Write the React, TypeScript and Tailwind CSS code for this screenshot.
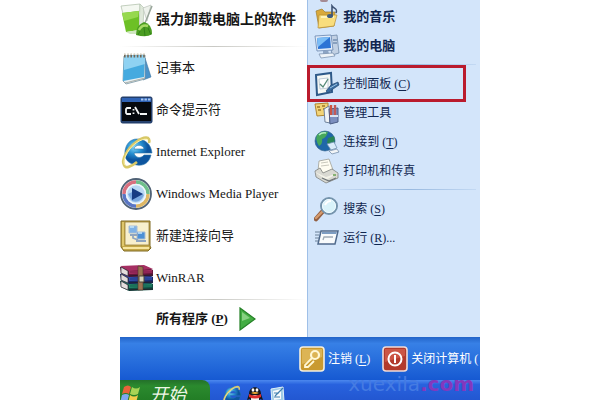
import React from "react";
import clsx from "clsx";

type MenuItem = {
  label: string;
  accessKey?: string;
  suffix?: string;
  icon: React.ReactNode;
  bold?: boolean;
  marked?: boolean;
};

const UninstallIcon = () => (
  <svg viewBox="0 0 34 36" className="h-9 w-[34px] shrink-0" aria-hidden="true">
    <path d="M1 4 20 2 20 9 3 12Z" fill="#f4f8f1" stroke="#b5c4b0" strokeWidth=".8" />
    <path d="M20 2 24 6 23 24 19 27Z" fill="#dfe8da" stroke="#b5c4b0" strokeWidth=".7" />
    <path d="M2 11 19 9 19 28 6 30Z" fill="#6dc026" />
    <path d="M2 11 19 9 18 15 4 19Z" fill="#96d84e" />
    <path d="M6 30 19 28 17 32 10 32Z" fill="#cfe6c0" />
    <path d="M23 6 31 3 27 19Z" fill="#eef2ec" stroke="#b9c2b8" strokeWidth=".7" />
    <path d="M32 4 25 21" stroke="#98a59a" strokeWidth="1.5" />
    <path d="M16 33Q16 23 24 20Q32 22 32 32Q27 36 16 33Z" fill="#4b9d22" />
    <path d="M19 28Q22 22 28 24" stroke="#a7db64" strokeWidth="2.4" fill="none" />
    <path d="M24 25 25 34M28 26 31 33M20 29 18 33" stroke="#2c7a15" strokeWidth=".8" />
  </svg>
);

const NotepadIcon = () => (
  <svg viewBox="0 0 34 36" className="h-9 w-[34px] shrink-0" aria-hidden="true">
    <path d="M25 8 31 27 23 30Z" fill="#4a93cb" stroke="#3a739f" strokeWidth=".6" />
    <path d="M4 6 25 5 25 29 6 34 3 31Z" fill="#e9f1f4" stroke="#7895a3" strokeWidth=".8" />
    <path d="M4 6 25 5 24 27 3 31Z" fill="#45aadf" />
    <path d="M4 6 25 5 25 14 4 20Z" fill="#8fd2f2" />
    <path d="M4 6h22" stroke="#726857" strokeWidth="3" strokeDasharray="1.6 1.6" />
    <path d="M4 4h22" stroke="#dad6c9" strokeWidth="1.5" strokeDasharray="1.6 1.6" />
    <path d="M5 33 25 28" stroke="#9a9f98" strokeWidth=".8" />
  </svg>
);

const PromptIcon = () => (
  <svg viewBox="0 0 34 28" className="h-7 w-[34px] shrink-0" aria-hidden="true">
    <rect x="1" y="1" width="31" height="26" rx="1.5" fill="#27436f" stroke="#1f3a68" />
    <path d="M2 2h29v4H2z" fill="#2f62b4" />
    <path d="M21 3.5h2.4M24.5 3.5h2.4M28 3.5h2.4" stroke="#a9c8f0" strokeWidth="2" />
    <path d="M2 6h29v19H2z" fill="#06090e" />
    <path
      d="M11 12H7l-1 1v4l1 1h4M13.500 13v1.500M13.500 16.500v1.500M15 11l4 7M20 18h7"
      stroke="#f3f5f5"
      strokeWidth="1.8"
      fill="none"
    />
  </svg>
);

const ExplorerIcon = ({ className }: { className: string }) => (
  <svg viewBox="0 0 34 34" className={clsx("shrink-0", className)} aria-hidden="true">
    <defs>
      <radialGradient id="ieBlue" cx=".35" cy=".3">
        <stop stopColor="#8cdaf7" />
        <stop offset=".55" stopColor="#258fd1" />
        <stop offset="1" stopColor="#0d559f" />
      </radialGradient>
    </defs>
    <path
      fillRule="evenodd"
      d="M17 4C25 4 31 9 32 18H14C15 23 21 24 24 20H31C29 28 24 31 17 30C8 29 4 24 5 16C6 9 10 4 17 4ZM14 14H24C23 9 15 9 14 14Z"
      fill="url(#ieBlue)"
      stroke="#2b75a9"
      strokeWidth=".6"
    />
    <path
      d="M29 8C31 1 24 1 16 7C7 14 1 25 4 30C5 34 11 32 17 27"
      stroke="#d8c867"
      strokeWidth="2.6"
      fill="none"
    />
    <path d="M28 5C25 2 15 7 9 15C4 22 3 28 5 30" stroke="#faf0a9" strokeWidth="1" fill="none" />
  </svg>
);

const MediaPlayerIcon = () => (
  <svg viewBox="0 0 34 34" className="h-[34px] w-[34px] shrink-0" aria-hidden="true">
    <circle cx="16" cy="17" r="15" fill="#e9eef3" stroke="#4f6175" strokeWidth="1.8" />
    <path d="M4 17A12 12 0 0 1 16 5" stroke="#d9707f" strokeWidth="3.4" fill="none" />
    <path d="M16 5A12 12 0 0 1 28 17" stroke="#6fbf8c" strokeWidth="3.4" fill="none" />
    <path d="M28 17A12 12 0 0 1 16 29" stroke="#dfb865" strokeWidth="3.4" fill="none" />
    <path d="M16 29A12 12 0 0 1 4 17" stroke="#5a76c4" strokeWidth="3.4" fill="none" />
    <circle cx="16" cy="17" r="9.5" fill="#b9d8f4" stroke="#edf6fb" strokeWidth="1.6" />
    <path d="M8 17Q16 12 24 18Q20 27 12 24Z" fill="#7aa8e0" />
    <path d="M12 11 23 17 12 23Z" fill="#173c83" />
  </svg>
);

const WizardIcon = () => (
  <svg viewBox="0 0 34 34" className="h-[34px] w-[34px] shrink-0" aria-hidden="true">
    <path d="M1 2H30V27L31 29 28 32H4L1 28Z" fill="#c4a84a" stroke="#806a22" />
    <path d="M5 3H29V26H5Z" fill="#f7efcd" stroke="#9a823a" strokeWidth=".8" />
    <path d="M3 29H29" stroke="#f7e6a0" strokeWidth="2" />
    <path d="M3 3V27" stroke="#dfc76c" strokeWidth="2" />
    <path d="M9 7H17V14H9Z" fill="#7fb2e6" stroke="#a7bdd8" />
    <path d="M17 13H25V20H17Z" fill="#4d90d6" stroke="#a7bdd8" />
    <path d="M10 16H18M16 22H26M13 16V19L18 21" stroke="#8fa5c0" strokeWidth="1.8" fill="none" />
    <path d="M10 8H14M18 14H22" stroke="#c8e6fa" strokeWidth="1.4" />
  </svg>
);

const Book = ({ y, fill, dark }: { y: number; fill: string; dark: string }) => (
  <g transform={`translate(0 ${y})`}>
    <path d="M0 2 25 1 33 5V11L9 12 1 8Z" fill={dark} />
    <path d="M0 1 24 0 33 4 9 6Z" fill={fill} />
    <path d="M9 6 32 5V8L9 9Z" fill={fill} />
    <path d="M10 7H32" stroke={dark} strokeWidth=".7" />
    <path d="M1 2 8 6V11L1 8Z" fill="#e4dddd" stroke="#322d38" strokeWidth=".7" />
    <path d="M9 11 33 10" stroke="#221d28" strokeWidth="1" />
  </g>
);

const WinRarIcon = () => (
  <svg viewBox="0 0 34 28" className="h-7 w-[34px] shrink-0" aria-hidden="true">
    <Book y={15} fill="#238468" dark="#104e42" />
    <Book y={8} fill="#3552b2" dark="#192969" />
    <Book y={1} fill="#a62f63" dark="#65153c" />
    <path d="M18 2 23 3V26H18Z" fill="#9c7252" stroke="#49362c" strokeWidth=".6" />
    <path d="M19 12H24V18H19Z" fill="#d7d3bb" stroke="#4b473d" />
  </svg>
);

const MusicIcon = () => (
  <svg viewBox="0 0 26 26" className="h-[26px] w-[26px] shrink-0" aria-hidden="true">
    <path d="M2 7 8 5 11 8H21L20 22 5 24Z" fill="#d9a93b" stroke="#9d7c2c" strokeWidth=".7" />
    <path d="M5 11H23L20 22 4 24Z" fill="#f8dd7d" stroke="#b98f35" strokeWidth=".7" />
    <path d="M7 13H20" stroke="#fff4ba" strokeWidth="2" />
    <ellipse cx="16" cy="12" rx="3" ry="2" fill="#3e5c80" />
    <path d="M18 12V2C20 5 24 4 22 9" stroke="#3e5374" strokeWidth="1.6" fill="none" />
  </svg>
);

const ComputerIcon = () => (
  <svg viewBox="0 0 26 26" className="h-[26px] w-[26px] shrink-0" aria-hidden="true">
    <path d="M15 3 23 2 25 20 18 22Z" fill="#c2d1e4" stroke="#637e9f" strokeWidth=".7" />
    <path d="M19 7H23M19 10H23" stroke="#4f709a" />
    <path d="M1 3 17 2 19 17 3 18Z" fill="#e2ecf8" stroke="#6684ae" strokeWidth=".8" />
    <path d="M3 5 16 4 17 15 4 16Z" fill="#2d74d5" />
    <path d="M3 5 16 4 4 14Z" fill="#7bbdf6" />
    <path d="M9 18 14 17 15 21 9 21Z" fill="#8ca4c4" />
    <path d="M5 21 19 20 21 23 7 25Z" fill="#eef3f8" stroke="#718aa9" strokeWidth=".7" />
  </svg>
);

const ControlPanelIcon = () => (
  <svg viewBox="0 0 26 26" className="h-[26px] w-[26px] shrink-0" aria-hidden="true">
    <path d="M2 4 17 2 18 21 3 24Z" fill="#f5f7f4" stroke="#2e5989" strokeWidth="2" />
    <path d="M5 8 14 7 14 17 6 18Z" fill="#fff" stroke="#a7bac8" strokeWidth=".7" />
    <path d="M6 13 9 16 14 8" stroke="#568a77" strokeWidth="1.3" fill="none" />
    <path d="M12 20 17 14 24 11 25 14 19 18 14 22Z" fill="#386ba0" stroke="#26486e" strokeWidth=".7" />
    <path d="M16 17 23 13" stroke="#9dc5e5" />
  </svg>
);

const ToolsIcon = () => (
  <svg viewBox="0 0 26 26" className="h-[26px] w-[26px] shrink-0" aria-hidden="true">
    <path d="M1 4 14 3 14 15 3 16Z" fill="#f3d477" stroke="#af8530" />
    <path d="M3 7H6M8 6H11M4 10H7M9 9H11" stroke="#9c7728" strokeWidth="1.6" />
    <path d="M10 9 15 6 16 23 11 22Z" fill="#f0f3f6" stroke="#70839b" />
    <path d="M15 9 24 8V22L16 24Z" fill="#7c8fbf" stroke="#4b5d85" />
    <path d="M17 5V17" stroke="#cd5440" strokeWidth="2.4" />
    <path d="M21 5V17" stroke="#c25a58" strokeWidth="2.4" />
    <path d="M16 16H24" stroke="#dbe5f2" strokeWidth="2" />
  </svg>
);

const ConnectIcon = () => (
  <svg viewBox="0 0 26 26" className="h-[26px] w-[26px] shrink-0" aria-hidden="true">
    <circle cx="11" cy="12" r="10" fill="#1f68a8" stroke="#2b5b83" strokeWidth=".6" />
    <path d="M3 6Q8 1 14 3Q12 9 8 10Q9 15 5 17Q1 11 3 6Z" fill="#45a75b" />
    <path d="M14 9 20 7Q22 13 18 17L13 14Z" fill="#298555" />
    <path d="M5 6Q8 3 12 4" stroke="#b4ecc5" strokeWidth="1.6" fill="none" />
    <path d="M13 15 20 13 23 19 17 21Z" fill="#d9ebf9" stroke="#6f90b0" strokeWidth=".8" />
    <path d="M15 22 23 20 25 23 18 25Z" fill="#f2f5f7" stroke="#7891ac" strokeWidth=".8" />
  </svg>
);

const PrinterIcon = () => (
  <svg viewBox="0 0 26 26" className="h-[26px] w-[26px] shrink-0" aria-hidden="true">
    <path d="M4 13 5 3 15 1 19 12 9 16Z" fill="#fffdf1" stroke="#a0a096" strokeWidth=".8" />
    <path d="M7 5 14 4M7 8 15 7" stroke="#c9c8bc" />
    <path d="M1 13 6 10 9 15 18 11 24 15V20L12 25 2 19Z" fill="#d9d9d2" stroke="#7f827f" strokeWidth=".8" />
    <path d="M1 14 12 19 24 15 12 22Z" fill="#f3f2e8" />
    <path d="M8 20 15 23 22 20" stroke="#6e7477" strokeWidth="1.3" fill="none" />
    <path d="M19 17H22" stroke="#66a151" strokeWidth="1.5" />
  </svg>
);

const SearchIcon = () => (
  <svg viewBox="0 0 26 26" className="h-[26px] w-[26px] shrink-0" aria-hidden="true">
    <path d="M9 15 2 23" stroke="#925f42" strokeWidth="4.6" strokeLinecap="round" />
    <path d="M8 16 2 22" stroke="#d59b6d" strokeWidth="2.4" strokeLinecap="round" />
    <circle cx="15" cy="10" r="8" fill="#c9ecf8" stroke="#7594ac" strokeWidth="2" />
    <circle cx="15" cy="10" r="6.5" fill="#d9f3fa" stroke="#f2fbff" />
    <path d="M11 9Q13 5 17 5" stroke="#fff" strokeWidth="2" fill="none" />
  </svg>
);

const RunIcon = () => (
  <svg viewBox="0 0 26 26" className="h-[26px] w-[26px] shrink-0" aria-hidden="true">
    <path d="M7 6H24L21 19H4Z" fill="#f9fbfc" stroke="#506a8c" strokeWidth="1.5" />
    <path d="M8 7H23L22 9H8Z" fill="#7d9dc2" />
    <path d="M9 15 10 12H19" stroke="#9eabb5" strokeWidth="1.3" fill="none" />
    <path d="M1 7H6M1 10H5M1 13H5M1 16H4" stroke="#6b8097" />
  </svg>
);

const KeyIcon = () => (
  <svg viewBox="0 0 26 26" className="h-[26px] w-[26px] shrink-0" aria-hidden="true">
    <rect x="1" y="1" width="24" height="24" rx="3" fill="#c99a30" stroke="#f4efe0" strokeWidth="1.6" />
    <path d="M3 3H23V11L3 18Z" fill="#dcb455" />
    <circle cx="16" cy="9" r="4" fill="none" stroke="#fff7d4" strokeWidth="2.2" />
    <path d="M13 12 6 19V21H9L15 15" stroke="#fff7d4" strokeWidth="1.8" fill="none" />
  </svg>
);

const PowerIcon = () => (
  <svg viewBox="0 0 26 26" className="h-[26px] w-[26px] shrink-0" aria-hidden="true">
    <rect x="1" y="1" width="24" height="24" rx="3" fill="#b23a2c" stroke="#f1dcd8" strokeWidth="1.6" />
    <path d="M3 3H23V10L3 16Z" fill="#cb5646" />
    <circle cx="13" cy="13" r="6.5" fill="none" stroke="#fff" strokeWidth="2" />
    <path d="M13 9V17" stroke="#fff" strokeWidth="2" />
  </svg>
);

const FlagIcon = () => (
  <svg viewBox="0 0 22 22" className="h-[22px] w-[22px] shrink-0" aria-hidden="true">
    <path d="M4 3Q8 0 11 3L9 10Q6 8 2 10Z" fill="#e8633a" />
    <path d="M12 3Q16 6 20 3L18 10Q14 12 10 10Z" fill="#a8d455" />
    <path d="M2 11Q6 9 9 11L7 19Q4 16 0 19Z" fill="#7fa8f0" />
    <path d="M10 11Q14 14 18 11L16 19Q12 21 8 19Z" fill="#f3cc4b" />
  </svg>
);

const PenguinIcon = () => (
  <svg viewBox="0 0 18 20" className="h-5 w-[18px] shrink-0" aria-hidden="true">
    <path d="M3 9C3 0 15 0 15 9L17 15 14 14 13 18H5L4 14 1 15Z" fill="#15171e" />
    <ellipse cx="9" cy="14" rx="4" ry="4" fill="#f7f7f2" />
    <path d="M3 9Q9 12 15 9V12Q9 15 3 12Z" fill="#dc2d2d" />
    <ellipse cx="7" cy="5" rx="1.4" ry="1.8" fill="#fff" />
    <ellipse cx="11" cy="5" rx="1.4" ry="1.8" fill="#fff" />
    <path d="M5 8Q9 6 13 8Q9 10 5 8Z" fill="#efac32" />
    <path d="M2 18H8M10 18H16" stroke="#efac32" strokeWidth="2" />
  </svg>
);

const DesktopIcon = () => (
  <svg viewBox="0 0 18 20" className="h-5 w-[18px] shrink-0" aria-hidden="true">
    <path d="M3 4 15 2 16 16 4 18Z" fill="#9fcbe6" stroke="#e1f1f8" />
    <path d="M5 6 13 4 13 14 6 15Z" fill="#f7fafc" />
    <path d="M7 11 15 3M6 8H11M6 12H12" stroke="#407fae" strokeWidth="1.2" />
  </svg>
);

const programs: MenuItem[] = [
  { label: "记事本", icon: <NotepadIcon /> },
  { label: "命令提示符", icon: <PromptIcon /> },
  { label: "Internet Explorer", icon: <ExplorerIcon className="h-[34px] w-[34px]" /> },
  { label: "Windows Media Player", icon: <MediaPlayerIcon /> },
  { label: "新建连接向导", icon: <WizardIcon /> },
  { label: "WinRAR", icon: <WinRarIcon /> },
];

const places: MenuItem[][] = [
  [
    { label: "我的音乐", icon: <MusicIcon />, bold: true },
    { label: "我的电脑", icon: <ComputerIcon />, bold: true },
  ],
  [
    { label: "控制面板", accessKey: "C", icon: <ControlPanelIcon />, marked: true },
    { label: "管理工具", icon: <ToolsIcon /> },
    { label: "连接到", accessKey: "T", icon: <ConnectIcon /> },
    { label: "打印机和传真", icon: <PrinterIcon /> },
  ],
  [
    { label: "搜索", accessKey: "S", icon: <SearchIcon /> },
    { label: "运行", accessKey: "R", suffix: "...", icon: <RunIcon /> },
  ],
];

const Label = ({ label, accessKey, suffix }: Pick<MenuItem, "label" | "accessKey" | "suffix">) => (
  <span className="whitespace-nowrap">
    {label}
    {accessKey && (
      <>
        {" ("}
        <u className="underline-offset-2">{accessKey}</u>)
      </>
    )}
    {suffix}
  </span>
);

const ProgramButton = ({ item }: { item: MenuItem }) => (
  <button type="button" className="flex h-[42px] w-full items-center gap-0.5 text-left text-[13px]">
    {item.icon}
    <Label {...item} />
  </button>
);

const PlaceButton = ({ item }: { item: MenuItem }) => (
  <button
    type="button"
    className={clsx(
      "relative flex h-[29px] w-full items-center gap-[3px] pl-1.5 text-left text-[#10264f]",
      item.bold ? "text-[13px] font-bold" : "text-xs"
    )}
  >
    {item.icon}
    <Label {...item} />
    {item.marked && (
      <span className="absolute -inset-y-1 right-3.5 -left-px border-[3px] border-[#ba1b2d]" />
    )}
  </button>
);

export default function App() {
  return (
    <main className="h-screen overflow-hidden bg-white font-['Liberation_Serif','Noto_Sans_CJK_SC',serif] text-[#161616]">
      <div className="mx-auto flex w-3/5 flex-col overflow-hidden">
        <div className="flex">
          <section className="w-[52%]">
            <button
              type="button"
              className="flex h-10 w-full items-center gap-0.5 text-left text-sm font-bold"
            >
              <UninstallIcon />
              <Label label="强力卸载电脑上的软件" />
            </button>
            <div className="mt-1.5 h-px bg-linear-to-r from-white via-[#c9c9c4] to-white" />
            {programs.map((item) => (
              <ProgramButton key={item.label} item={item} />
            ))}
            <div className="h-px bg-linear-to-r from-white via-[#c9c9c4] to-white" />
            <button
              type="button"
              className="flex h-[37px] w-full items-center gap-2.5 pl-9 text-[13px] font-bold"
            >
              <Label label="所有程序" accessKey="P" />
              <svg viewBox="0 0 18 24" className="h-6 w-[18px]" aria-hidden="true">
                <path d="M2 1 17 12 2 23Z" fill="#43ad43" stroke="#258127" strokeWidth="1.2" />
                <path d="M4 5 12 11 4 14Z" fill="#86d181" />
              </svg>
            </button>
          </section>

          <section className="relative flex-1 border-l border-[#9fc0e8] bg-[#d3e5fa] pt-0.5">
            <span className="absolute top-0 left-3 h-0.5 w-2 rounded-b-full bg-[#a58b93]" />
            {places.map((group, i) => (
              <React.Fragment key={group[0].label}>
                {i > 0 && (
                  <div className="flex h-[9px] items-center pr-1 pl-8">
                    <div className="h-px w-full bg-linear-to-r from-[#c3d9f3] via-[#98b9df] to-[#c3d9f3]" />
                  </div>
                )}
                {group.map((item) => (
                  <PlaceButton key={item.label} item={item} />
                ))}
              </React.Fragment>
            ))}
          </section>
        </div>

        <div className="flex h-[43px] items-center gap-3 overflow-hidden bg-linear-to-b from-[#2364c8] via-[#3780e6] via-15% to-[#1659d2] pl-[49.700%] text-xs text-white">
          <button type="button" className="flex shrink-0 items-center gap-[3px]">
            <KeyIcon />
            <Label label="注销" accessKey="L" />
          </button>
          <button type="button" className="flex shrink-0 items-center gap-[3px]">
            <PowerIcon />
            <Label label="关闭计算机 (" />
          </button>
        </div>

        <div className="relative flex h-[30px] items-center bg-linear-to-b from-[#4c88ee] via-[#2862de] via-15% to-[#1f50c9]">
          <button
            type="button"
            className="flex h-full w-1/4 items-center gap-2 rounded-r-lg bg-linear-to-b from-[#23702a] via-[#2b8a2e] via-20% to-[#1c7420] text-lg text-[#eef6e6] italic"
          >
            <FlagIcon />
            开始
          </button>
          <div className="flex items-center gap-1 pl-3">
            <ExplorerIcon className="h-5 w-5" />
            <PenguinIcon />
            <DesktopIcon />
          </div>
          <p className="absolute -top-2.5 right-1.5 font-['DejaVu_Sans',sans-serif] text-xl text-[#457be2]">
            xuexila<span className="font-bold text-[#8338bd]">.com</span>
          </p>
        </div>
      </div>
    </main>
  );
}
